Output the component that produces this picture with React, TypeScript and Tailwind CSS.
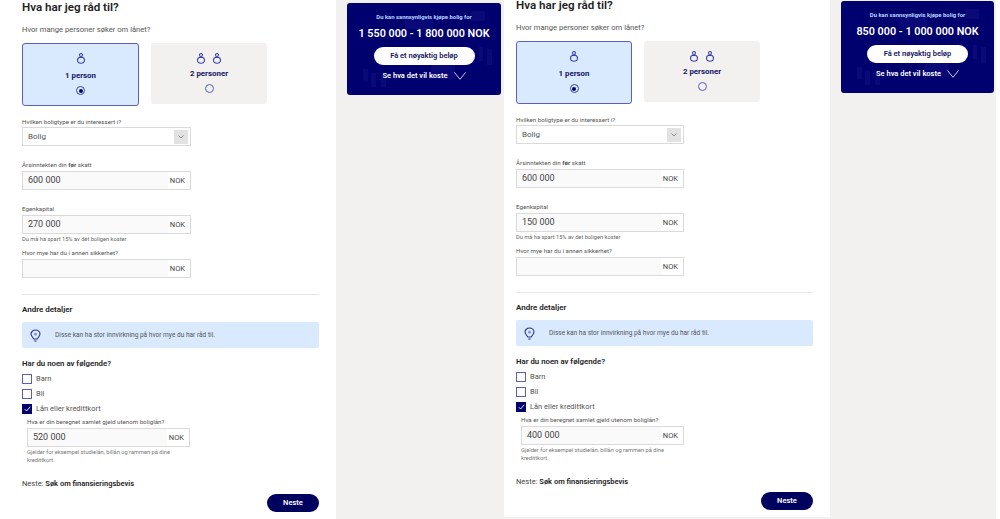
import React from 'react';

const font = { fontFamily: 'Roboto, "Noto Sans", sans-serif' };

const PersonIcon: React.FC = () => (
  <svg width="8" height="11" viewBox="0 0 8 11" fill="none" stroke="#3f43a6" strokeWidth="1.1">
    <circle cx="4" cy="2" r="1.5" />
    <path d="M2.5 4.4 C1.1 4.8 0.5 5.9 0.5 7 C0.5 8.9 2 10.3 4 10.3 C6 10.3 7.5 8.9 7.5 7 C7.5 5.9 6.9 4.8 5.5 4.4 Z" />
  </svg>
);

const Chevron: React.FC = () => (
  <svg width="6" height="4" viewBox="0 0 6 4" fill="none" stroke="#777" strokeWidth="0.8">
    <path d="M0.5 0.5 L3 3 L5.5 0.5" />
  </svg>
);

const PersonCards: React.FC<{ firstWidth: string }> = ({ firstWidth }) => (
  <div className="flex items-start gap-[12px] mt-[7px]">
    <div className={`${firstWidth} h-[63px] rounded-[3px] border border-[#5b5fc0] bg-[#d9eaff] flex flex-col items-center pt-[9px]`}>
      <PersonIcon />
      <div className="text-[7.9px] leading-[10px] font-bold text-[#14145f] mt-[7px]">1 person</div>
      <div className="mt-[5px] w-[9px] h-[9px] rounded-full border border-[#3f43a6] flex items-center justify-center">
        <div className="w-[4px] h-[4px] rounded-full bg-[#00006e]" />
      </div>
    </div>
    <div className="w-[116px] h-[61px] rounded-[3px] bg-[#f2f1ef] flex flex-col items-center pt-[10px]">
      <div className="flex gap-[8px]">
        <PersonIcon />
        <PersonIcon />
      </div>
      <div className="text-[7.9px] leading-[10px] font-bold text-[#14145f] mt-[5px]">2 personer</div>
      <div className="mt-[5px] w-[9px] h-[9px] rounded-full border border-[#5b5fc0]" />
    </div>
  </div>
);

const Label: React.FC<{ children: React.ReactNode; className?: string }> = ({ children, className }) => (
  <div className={`text-[6.2px] leading-[9px] text-[#555] ${className ?? ''}`}>{children}</div>
);

const MoneyInput: React.FC<{ value?: string; className: string }> = ({ value, className }) => (
  <div className={`h-[19px] mt-[1px] border border-[#dadada] flex text-[#444] ${className}`}>
    <div className="flex-1 bg-[#fafafa] pl-[5px] text-[9px] leading-[17px]">{value}</div>
    <div className="w-[22px] bg-white pr-[5px] text-right text-[7.5px] leading-[18px]">NOK</div>
  </div>
);

const Check: React.FC<{ label: string; checked?: boolean }> = ({ label, checked }) => (
  <div className="flex items-center h-[10px] gap-[4px]">
    {checked ? (
      <div className="w-[10px] h-[10px] bg-[#00006e] flex items-center justify-center">
        <svg width="7" height="6" viewBox="0 0 7 6" fill="none" stroke="#fff" strokeWidth="0.9">
          <path d="M0.8 3.2 L2.6 5 L6.2 0.8" />
        </svg>
      </div>
    ) : (
      <div className="w-[10px] h-[10px] border border-[#5b5fc0] bg-white" />
    )}
    <span className="text-[7.5px] leading-[10px] text-[#555]">{label}</span>
  </div>
);

const Panel: React.FC<{
  equity: string;
  debt: string;
  className: string;
  firstWidth: string;
  inputWidth: string;
}> = ({ equity, debt, className, firstWidth, inputWidth }) => (
  <div className={`shrink-0 bg-white pr-[17px] flex flex-col ${className}`}>
    <div className="text-[11.6px] leading-[10px] font-semibold text-[#222]">Hva har jeg råd til?</div>
    <div className="text-[7.6px] leading-[12px] text-[#555] mt-[12px]">Hvor mange personer søker om lånet?</div>
    <PersonCards firstWidth={firstWidth} />

    <Label className="mt-[12px]">Hvilken boligtype er du interessert i?</Label>
    <div className={`${inputWidth} h-[19px] border border-[#dadada] bg-white flex items-center justify-between pl-[5px] pr-[2px]`}>
      <span className="text-[8px] text-[#555]">Bolig</span>
      <div className="w-[14px] h-[14px] bg-[#e2e2e2] flex items-center justify-center">
        <Chevron />
      </div>
    </div>

    <Label className="mt-[15px]">
      Årsinntekten din <b className="font-bold">før</b> skatt
    </Label>
    <MoneyInput value="600 000" className={inputWidth} />

    <Label className="mt-[15px]">Egenkapital</Label>
    <MoneyInput value={equity} className={inputWidth} />
    <div className="text-[5.7px] leading-[8px] text-[#666] mt-[1px]">Du må ha spart 15% av det boligen koster</div>

    <Label className="mt-[6px]">Hvor mye har du i annen sikkerhet?</Label>
    <MoneyInput className={inputWidth} />

    <div className="h-[1px] bg-[#e6e6e6] mt-[16px]" />
    <div className="text-[8px] leading-[12px] font-semibold text-[#222] mt-[9px]">Andre detaljer</div>

    <div className="h-[26px] mt-[6px] rounded-[2px] bg-[#d9eaff] flex items-center pl-[8px] gap-[14px]">
      <svg width="11" height="13" viewBox="0 0 11 13" fill="none" stroke="#2f338f" strokeWidth="1.1">
        <path d="M5.5 1 C2.9 1 1 2.9 1 5.1 C1 7 2.6 8 3.8 10 L7.2 10 C8.4 8 10 7 10 5.1 C10 2.9 8.1 1 5.5 1 Z" />
        <circle cx="5.5" cy="5.2" r="1.4" fill="#8f93d6" stroke="none" />
        <path d="M4.4 12 L6.6 12" />
      </svg>
      <span className="text-[6.55px] leading-[10px] text-[#555]">Disse kan ha stor innvirkning på hvor mye du har råd til.</span>
    </div>

    <div className="text-[7.8px] leading-[12px] font-semibold text-[#222] mt-[10px]">Har du noen av følgende?</div>
    <div className="flex flex-col gap-[5px] mt-[4px]">
      <Check label="Barn" />
      <Check label="Bil" />
      <Check label="Lån eller kredittkort" checked />
    </div>

    <div className="pl-[5px] mt-[4px]">
      <Label>Hva er din beregnet samlet gjeld utenom boliglån?</Label>
      <MoneyInput value={debt} className="w-[163px]" />
      <div className="w-[163px] text-[5.7px] leading-[8px] text-[#777] mt-[1px]">
        Gjelder for eksempel studielån, billån og rammen på dine kredittkort.
      </div>
    </div>

    <div className="text-[7.5px] leading-[12px] text-[#444] mt-[14px]">
      Neste: <b className="font-semibold text-[#222]">Søk om finansieringsbevis</b>
    </div>
    <div className="flex justify-end mt-[4px]">
      <div className="w-[52px] h-[18px] rounded-full bg-[#00005f] text-white text-[7.5px] font-semibold leading-[18px] text-center">Neste</div>
    </div>
  </div>
);

const Promo: React.FC<{ amount: string; className: string }> = ({ amount, className }) => (
  <div className={`relative overflow-hidden h-[92px] rounded-[3px] bg-[#00006e] flex flex-col items-center text-white ${className}`}>
    <svg className="absolute inset-0" width="154" height="92" viewBox="0 0 154 92" fill="#1a1f8c" opacity="0.35">
      <rect x="16" y="66" width="5" height="12" />
      <rect x="24" y="70" width="5" height="14" />
      <rect x="34" y="72" width="5" height="12" />
      <rect x="132" y="44" width="4" height="14" />
      <rect x="140" y="46" width="5" height="16" />
      <rect x="124" y="8" width="14" height="10" />
      <rect x="58" y="14" width="28" height="12" />
      <rect x="84" y="62" width="24" height="14" />
    </svg>
    <div className="relative text-[5.9px] leading-[8px] font-bold text-[#b9d6ff] mt-[10px]">Du kan sannsynligvis kjøpe bolig for</div>
    <div className="relative text-[10.8px] leading-[14px] font-semibold mt-[6px] whitespace-nowrap">{amount}</div>
    <div className="relative w-[101px] h-[18px] rounded-full bg-white text-[#14145f] text-[7.5px] font-semibold leading-[18px] text-center mt-[6px]">
      Få et nøyaktig beløp
    </div>
    <div className="relative flex items-center gap-[6px] mt-[4px]">
      <span className="text-[7.5px] leading-[14px] font-semibold">Se hva det vil koste</span>
      <svg width="12" height="8" viewBox="0 0 12 8" fill="none" stroke="#fff" strokeWidth="0.8">
        <path d="M0.5 0.5 L6 7.3 L11.5 0.5" />
      </svg>
    </div>
  </div>
);

const App: React.FC = () => (
  <div className="w-[1000px] h-[519px] overflow-hidden bg-white flex items-stretch" style={font}>
    <Panel
      equity="270 000"
      debt="520 000"
      className="w-[336px] pl-[22px] pt-[2px]"
      firstWidth="w-[117px]"
      inputWidth="w-[169px]"
    />
    <div className="w-[168px] shrink-0 bg-[#f2f1ef] pl-[11px] pt-[3px]">
      <Promo amount="1 550 000 - 1 800 000 NOK" className="w-[154px]" />
    </div>
    <div className="w-[326px] shrink-0 bg-[#f2f1ef]">
      <Panel
        equity="150 000"
        debt="400 000"
        className="w-[326px] pl-[12px] h-[517px]"
        firstWidth="w-[116px]"
        inputWidth="w-[168px]"
      />
    </div>
    <div className="w-[166px] shrink-0 bg-[#f2f1ef] pl-[11px] pt-[1px]">
      <Promo amount="850 000 - 1 000 000 NOK" className="w-[153px]" />
    </div>
  </div>
);

export default App;
